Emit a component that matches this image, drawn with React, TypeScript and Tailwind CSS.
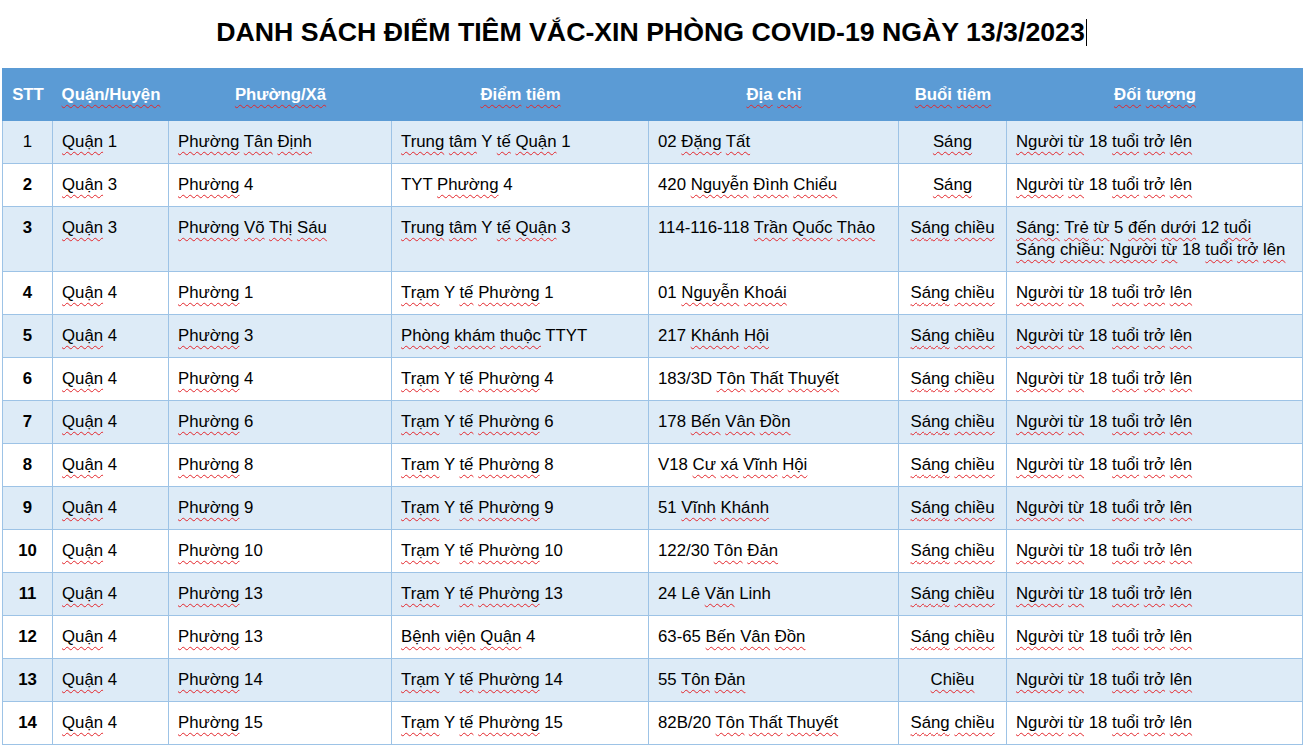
import React from "react";

const NO_SQ = new Set(["Y", "TYT", "TTYT", "STT", "Lê", "Linh", "V18", "183/3D", "82B/20", "114-116-118", "122/30", "63-65"]);

function W({ t }: { t: string }) {
  const parts = t.split(" ");
  return (
    <>
      {parts.map((p, i) => {
        const plain = NO_SQ.has(p) || /^[0-9\/\-:]+$/.test(p);
        return (
          <React.Fragment key={i}>
            {i > 0 ? " " : ""}
            {plain ? (
              <span>{p}</span>
            ) : (
              <span className="underline decoration-wavy decoration-[#e3262b] decoration-1 underline-offset-[4px]">{p}</span>
            )}
          </React.Fragment>
        );
      })}
    </>
  );
}

type Row = {
  stt: string;
  q: string;
  p: string;
  d: string;
  a: string;
  b: string;
  o: string[];
};

const T = "Người từ 18 tuổi trở lên";

const rows: Row[] = [
  { stt: "1", q: "Quận 1", p: "Phường Tân Định", d: "Trung tâm Y tế Quận 1", a: "02 Đặng Tất", b: "Sáng", o: [T] },
  { stt: "2", q: "Quận 3", p: "Phường 4", d: "TYT Phường 4", a: "420 Nguyễn Đình Chiểu", b: "Sáng", o: [T] },
  { stt: "3", q: "Quận 3", p: "Phường Võ Thị Sáu", d: "Trung tâm Y tế Quận 3", a: "114-116-118 Trần Quốc Thảo", b: "Sáng chiều", o: ["Sáng: Trẻ từ 5 đến dưới 12 tuổi", "Sáng chiều: Người từ 18 tuổi trở lên"] },
  { stt: "4", q: "Quận 4", p: "Phường 1", d: "Trạm Y tế Phường 1", a: "01 Nguyễn Khoái", b: "Sáng chiều", o: [T] },
  { stt: "5", q: "Quận 4", p: "Phường 3", d: "Phòng khám thuộc TTYT", a: "217 Khánh Hội", b: "Sáng chiều", o: [T] },
  { stt: "6", q: "Quận 4", p: "Phường 4", d: "Trạm Y tế Phường 4", a: "183/3D Tôn Thất Thuyết", b: "Sáng chiều", o: [T] },
  { stt: "7", q: "Quận 4", p: "Phường 6", d: "Trạm Y tế Phường 6", a: "178 Bến Vân Đồn", b: "Sáng chiều", o: [T] },
  { stt: "8", q: "Quận 4", p: "Phường 8", d: "Trạm Y tế Phường 8", a: "V18 Cư xá Vĩnh Hội", b: "Sáng chiều", o: [T] },
  { stt: "9", q: "Quận 4", p: "Phường 9", d: "Trạm Y tế Phường 9", a: "51 Vĩnh Khánh", b: "Sáng chiều", o: [T] },
  { stt: "10", q: "Quận 4", p: "Phường 10", d: "Trạm Y tế Phường 10", a: "122/30 Tôn Đản", b: "Sáng chiều", o: [T] },
  { stt: "11", q: "Quận 4", p: "Phường 13", d: "Trạm Y tế Phường 13", a: "24 Lê Văn Linh", b: "Sáng chiều", o: [T] },
  { stt: "12", q: "Quận 4", p: "Phường 13", d: "Bệnh viện Quận 4", a: "63-65 Bến Vân Đồn", b: "Sáng chiều", o: [T] },
  { stt: "13", q: "Quận 4", p: "Phường 14", d: "Trạm Y tế Phường 14", a: "55 Tôn Đản", b: "Chiều", o: [T] },
  { stt: "14", q: "Quận 4", p: "Phường 15", d: "Trạm Y tế Phường 15", a: "82B/20 Tôn Thất Thuyết", b: "Sáng chiều", o: [T] },
];

const GRID = "grid grid-cols-[50px_116px_223px_257px_250px_108px_296px]";
const CELL = "border-r border-[#9dc3e6] pt-[10px] pb-[10px] leading-[22px]";

export default function App() {
  return (
    <div className="w-[1303px] h-[745px] overflow-hidden bg-white text-black" style={{ fontFamily: '"Liberation Sans", Arial, sans-serif' }}>
      <div className="h-[68px] pb-[3px] flex items-center justify-center">
        <h1 className="text-[26.7px] font-bold leading-none flex items-center">
          DANH SÁCH ĐIỂM TIÊM VẮC-XIN PHÒNG COVID-19 NGÀY 13/3/2023
          <span className="inline-block w-px h-[27px] bg-black ml-[1px]" />
        </h1>
      </div>
      <div className="ml-[2px] w-[1301px] text-[16.8px]">
        <div className={`${GRID} h-[53px] bg-[#5b9bd5] text-white font-bold items-center text-center pl-px`}>
          <div><W t="STT" /></div>
          <div><W t="Quận/Huyện" /></div>
          <div><W t="Phường/Xã" /></div>
          <div><W t="Điểm tiêm" /></div>
          <div><W t="Địa chỉ" /></div>
          <div><W t="Buổi tiêm" /></div>
          <div><W t="Đối tượng" /></div>
        </div>
        {rows.map((r, i) => (
          <div key={r.stt} className={`${GRID} border-l border-b border-[#9dc3e6] ${i % 2 === 0 ? "bg-[#ddebf7]" : "bg-white"}`}>
            <div className={`${CELL} text-center ${r.stt === "1" ? "" : "font-bold"}`}>{r.stt}</div>
            <div className={`${CELL} pl-[9px]`}><W t={r.q} /></div>
            <div className={`${CELL} pl-[9px]`}><W t={r.p} /></div>
            <div className={`${CELL} pl-[9px]`}><W t={r.d} /></div>
            <div className={`${CELL} pl-[9px]`}><W t={r.a} /></div>
            <div className={`${CELL} text-center`}><W t={r.b} /></div>
            <div className={`${CELL} pl-[9px]`}>
              {r.o.map((l, j) => (
                <div key={j}><W t={l} /></div>
              ))}
            </div>
          </div>
        ))}
      </div>
      <div className="h-[2px] bg-[#c6c6c6]" />
    </div>
  );
}
